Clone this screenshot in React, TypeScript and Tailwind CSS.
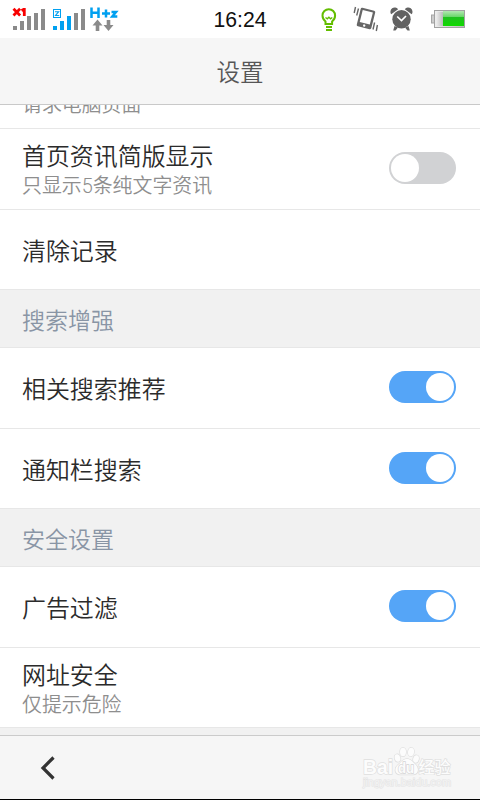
import React from "react";

const FONT = "font-['Roboto','Noto_Sans_CJK_SC',sans-serif]";

function StatusBar() {
  return (
    <div className="h-[38px] shrink-0 bg-white">
      <svg width="480" height="38" viewBox="0 0 480 38" className="block">
        {/* first SIM signal */}
        <g fill="#8a8a8a" shapeRendering="crispEdges">
          <rect x="13" y="26" width="4" height="4" />
          <rect x="20" y="21" width="4" height="9" />
          <rect x="27" y="16" width="4" height="14" />
          <rect x="34" y="13" width="4" height="17" />
          <rect x="41" y="9" width="4" height="21" />
        </g>
        <g stroke="#f80000" strokeWidth="2.8" fill="none">
          <path d="M13.500 8.800l6.600 6.600M20.100 8.800l-6.600 6.600M21.500 10.500l2.500-1.200M24.300 8v8" />
        </g>
        {/* second SIM signal */}
        <g>
          <rect x="53.500" y="9.500" width="7" height="8" fill="white" stroke="#00a0f0" />
          <path d="M55 11.700h3.700l-3.200 3.800h3.700" fill="none" stroke="#00a0f0" strokeWidth="1.100" />
          <g fill="#00a0f0">
            <rect x="53" y="26" width="4" height="4" />
            <rect x="60" y="21" width="4" height="9" />
            <rect x="67" y="16" width="4" height="14" />
          </g>
          <g fill="#8a8a8a">
            <rect x="74" y="13" width="4" height="17" />
            <rect x="81" y="9" width="4" height="21" />
          </g>
        </g>
        {/* mobile data */}
        <path d="M91.500 7.500V18M98.500 7.500V18M91 12.700h8M102 13.500h8M106 9.500v8M111.500 12h4.500l-3.700 4.500h5" fill="none" stroke="#00a0f0" strokeWidth="2.500" />
        <path d="M97.500 19.500l5 6h-3.200v5.500h-3.600v-5.500h-3.200zM108.500 31l-5-6h3.200v-5h3.600v5h3.200z" fill="#8a8a8a" />
        <text x="213.500" y="27" fontSize="22" textLength="53" lengthAdjust="spacingAndGlyphs" fill="#111" className="font-['Liberation_Sans',Arial,sans-serif]">16:24</text>
        {/* reading light */}
        <g fill="none" stroke="#63bd00" strokeWidth="2">
          <path d="M325.500 24v-2.500c-2-1.600-3-3.500-3-6a6.300 6.300 0 0 1 12.600 0c0 2.500-1 4.400-3 6V24z" />
          <path d="M325.500 17.500l1.800 1.300 1.600-1.500 1.600 1.500 1.800-1.300" strokeWidth="1.400" />
          <path d="M326 27h6M326 30h6" />
        </g>
        {/* vibrating handset */}
        <g transform="rotate(14 366 18.500)">
          <rect x="358.500" y="9" width="15" height="19" rx="1.500" fill="#666" />
          <rect x="360.800" y="11" width="10.400" height="12.500" fill="white" />
          <circle cx="366" cy="25.800" r="1.200" fill="white" />
        </g>
        <path d="M355.500 7l-1.300 6M358.500 8.500l-1.800 7M373 29.500l1.600-7M376.300 31l1.100-6" stroke="#666" strokeWidth="1.400" fill="none" />
        {/* alarm */}
        <g fill="#626262">
          <path d="M391.200 14.300a4.200 4.200 0 0 1 6.900-5zM411.700 14.300a4.200 4.200 0 0 0-6.900-5z" />
          <circle cx="401.500" cy="19.300" r="9.200" />
          <path d="M394.500 26l-1.300 4.600h2.300l2.500-3zM408.500 26l1.300 4.600h-2.300l-2.500-3z" />
          <path d="M397.200 16.500l4.300 4 4.500-4.500" fill="none" stroke="white" strokeWidth="1.700" />
        </g>
        {/* battery */}
        <defs>
          <linearGradient id="charge" x1="0" y1="0" x2="0" y2="1">
            <stop offset="0" stopColor="#b3e6b3" />
            <stop offset=".38" stopColor="#6bd76b" />
            <stop offset=".42" stopColor="#20c020" />
            <stop offset="1" stopColor="#10da00" />
          </linearGradient>
          <linearGradient id="cell" x1="0" y1="0" x2="1" y2="0">
            <stop offset="0" stopColor="#eee" />
            <stop offset="1" stopColor="#bbb" />
          </linearGradient>
        </defs>
        <rect x="431.500" y="15" width="4" height="8" fill="#ccc" stroke="#a5a5a5" />
        <rect x="434.500" y="10.500" width="30" height="17" fill="url(#cell)" stroke="#a2a2a2" />
        <rect x="436" y="12" width="7" height="14" fill="url(#cell)" />
        <rect x="443" y="11" width="21" height="15" fill="url(#charge)" />
      </svg>
    </div>
  );
}

function Toggle({ on }: { on: boolean }) {
  return (
    <div
      className={
        "mb-0.5 flex h-8 w-[67px] items-center rounded-full px-[2px] " +
        (on ? "justify-end bg-[#55a5f7]" : "justify-start bg-[#d1d2d4]")
      }
    >
      <div className="h-7 w-7 rounded-full bg-white" />
    </div>
  );
}

function Row({ title, sub, on, tall }: { title: string; sub?: string; on?: boolean; tall?: boolean }) {
  return (
    <div
      className={
        "flex shrink-0 items-center justify-between border-b border-[#e7e7e7] bg-white pl-[22px] pr-6 " +
        (tall ? "h-[81px]" : "h-20")
      }
    >
      <div className={sub ? (tall ? "pt-0.5" : "pt-1") : tall ? "pt-1" : "pt-[5px]"}>
        <div className={"text-[23.950px] font-[350] text-[#2b2b2b] " + (sub ? "leading-[32px]" : "leading-[36px]")}>{title}</div>
        {sub && <div className="text-[19.900px] font-[350] leading-[27px] text-[#8e8e8e]">{sub}</div>}
      </div>
      {on !== undefined && <Toggle on={on} />}
    </div>
  );
}

function Section({ title }: { title: string }) {
  return (
    <div className="flex h-[58px] shrink-0 items-center border-b border-[#e7e7e7] bg-[#f1f1f1] pl-[22px] pt-1.5 text-[23px] font-[350] leading-[34px] text-[#8995a5]">
      {title}
    </div>
  );
}

function Watermark() {
  return (
    <svg width="94" height="46" viewBox="0 0 94 46" className="mt-[3px]">
      <g fill="#fcfcfc" stroke="#dfdfdf" strokeWidth="1.4" className="font-['Liberation_Sans','Noto_Sans_CJK_SC',sans-serif] font-bold [paint-order:stroke]">
        <text x="2" y="28" fontSize="20" textLength="30" lengthAdjust="spacingAndGlyphs">Bai</text>
        <ellipse cx="42" cy="6" rx="3" ry="4.200" />
        <ellipse cx="50" cy="6" rx="3" ry="4.200" transform="rotate(8 50 6)" />
        <ellipse cx="36.500" cy="12" rx="2.800" ry="3.800" transform="rotate(-15 36.500 12)" />
        <ellipse cx="55" cy="13" rx="2.800" ry="3.800" transform="rotate(15 55 13)" />
        <path d="M46 13c-4 0-5.500 3-8.500 5.500-5 4-3.500 10 1.500 10h13c5.500 0 6.500-6 2.500-10C51.500 16 50 13 46 13z" />
        <text x="37" y="26.500" fontSize="14" textLength="16" lengthAdjust="spacingAndGlyphs" stroke="#d4d4d4">du</text>
        <text x="57.500" y="27" fontSize="16" textLength="32" className="font-medium">经验</text>
        <text x="2" y="40" fontSize="10" textLength="88" lengthAdjust="spacingAndGlyphs" fill="#f3f3f3" stroke="#e4e4e4" strokeWidth="1" className="font-normal">jingyan.baidu.com</text>
      </g>
    </svg>
  );
}

export default function App() {
  return (
    <div lang="zh-CN" className={"flex h-[800px] w-[480px] flex-col overflow-hidden bg-[#f1f1f1] " + FONT}>
      <StatusBar />
      <header className="flex h-[67px] shrink-0 items-center justify-center border-b border-[#c9c9c9] bg-[#f6f6f6] pt-[6px] text-[23.500px] font-[350] text-[#565656]">
        设置
      </header>
      <div className="flex h-6 shrink-0 items-end overflow-hidden border-b border-[#e7e7e7] bg-white pb-[9px] pl-[22px] text-[19.900px] font-[350] leading-[27px] text-[#8e8e8e]">
        请求电脑页面
      </div>
      <Row title="首页资讯简版显示" sub="只显示5条纯文字资讯" on={false} tall />
      <Row title="清除记录" />
      <Section title="搜索增强" />
      <Row title="相关搜索推荐" on tall />
      <Row title="通知栏搜索" on />
      <Section title="安全设置" />
      <Row title="广告过滤" on tall />
      <Row title="网址安全" sub="仅提示危险" />
      <footer className="mt-[7px] flex h-16 shrink-0 items-center justify-between border-t border-[#cbcbcb] bg-[#f6f6f6] pl-10 pr-[25px]">
        <svg width="18" height="26" viewBox="0 0 18 26" fill="none" stroke="#333" strokeWidth="3.200">
          <path d="M13.500 2.500L3 13l10.500 10.500" />
        </svg>
        <Watermark />
      </footer>
      <div className="h-px shrink-0 bg-black" />
    </div>
  );
}
